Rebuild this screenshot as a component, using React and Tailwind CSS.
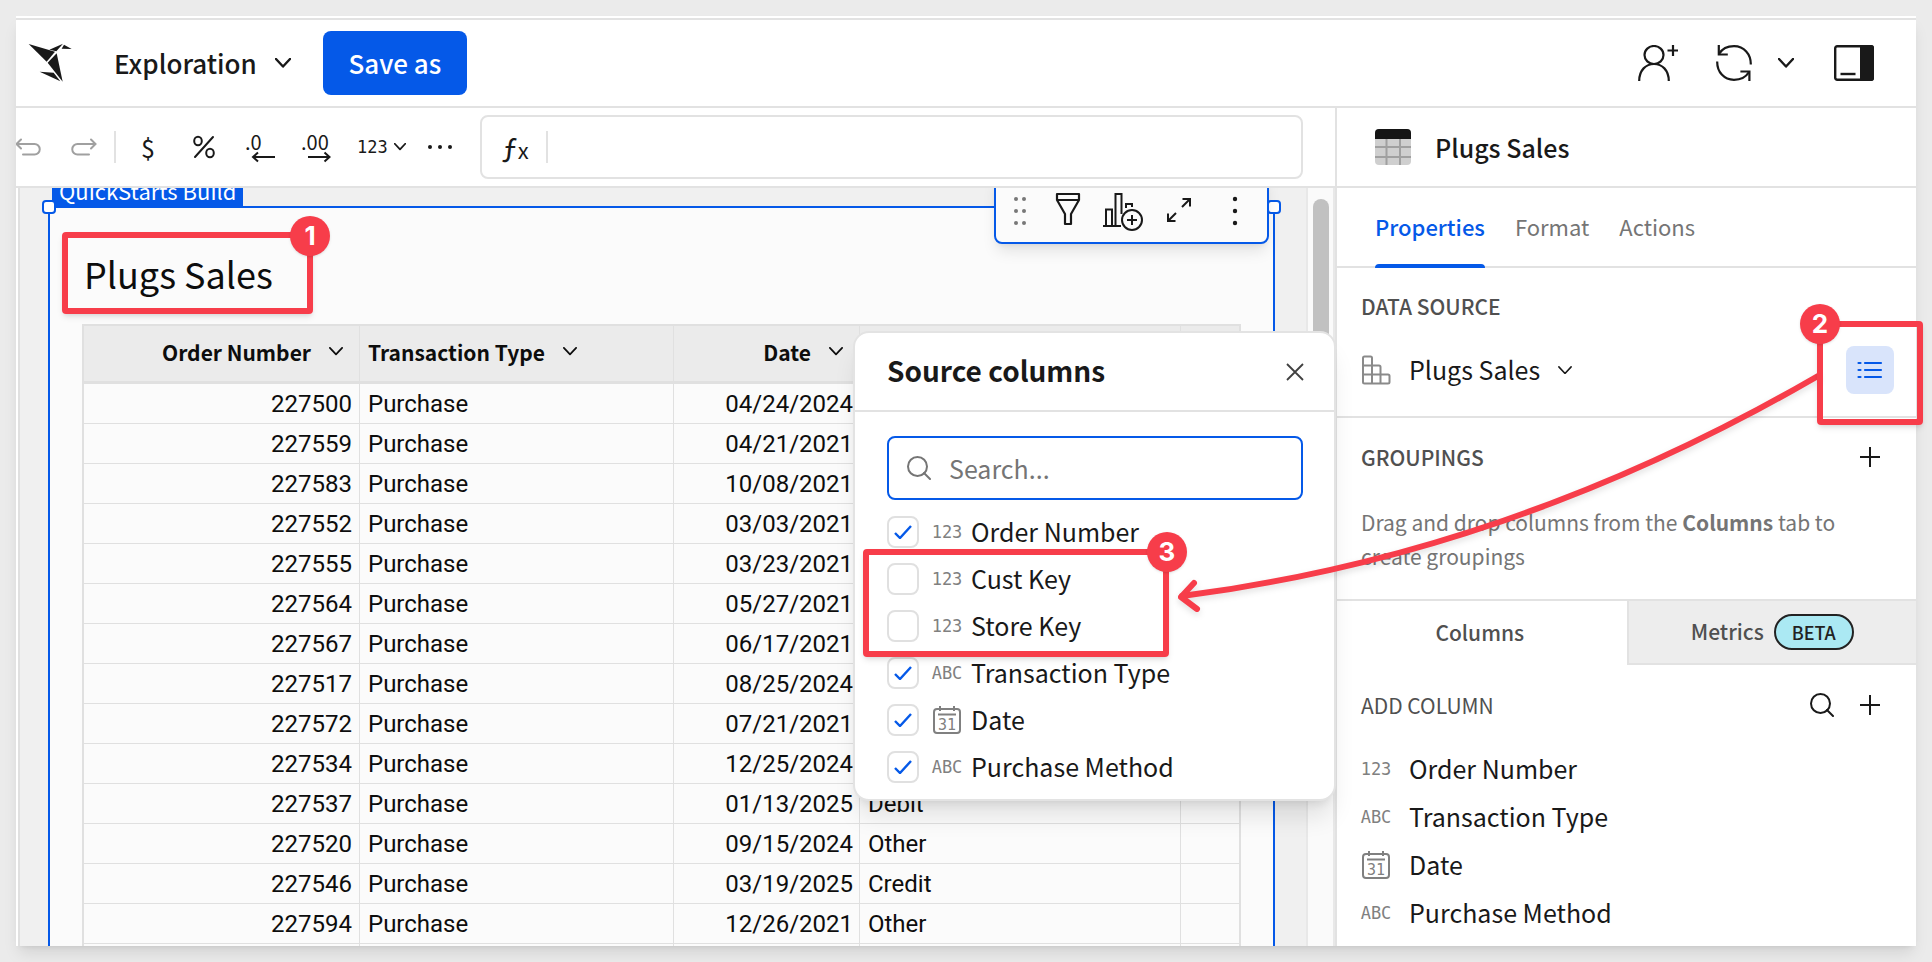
const ROWS = [
  ["227500", "04/24/2024", "Credit"],
  ["227559", "04/21/2021", "Debit"],
  ["227583", "10/08/2021", "Credit"],
  ["227552", "03/03/2021", "Other"],
  ["227555", "03/23/2021", "Debit"],
  ["227564", "05/27/2021", "Credit"],
  ["227567", "06/17/2021", "Other"],
  ["227517", "08/25/2024", "Debit"],
  ["227572", "07/21/2021", "Credit"],
  ["227534", "12/25/2024", "Other"],
  ["227537", "01/13/2025", "Debit"],
  ["227520", "09/15/2024", "Other"],
  ["227546", "03/19/2025", "Credit"],
  ["227594", "12/26/2021", "Other"],
];

const SOURCE_COLUMNS = [
  { name: "Order Number", type: "number", on: true },
  { name: "Cust Key", type: "number", on: false },
  { name: "Store Key", type: "number", on: false },
  { name: "Transaction Type", type: "text", on: true },
  { name: "Date", type: "date", on: true },
  { name: "Purchase Method", type: "text", on: true },
];

const TABLE_COLUMNS = SOURCE_COLUMNS.filter((c) => c.on);

function Chevron({ className = "w-4", strokeWidth = 2 }) {
  return (
    <svg viewBox="0 0 16 10" className={className} fill="none" stroke="currentColor" strokeWidth={strokeWidth} strokeLinecap="round" strokeLinejoin="round" aria-hidden="true">
      <path d="M1 1l7 7.5L15 1" />
    </svg>
  );
}

function Plus() {
  return (
    <svg viewBox="0 0 20 20" className="size-5" fill="none" stroke="currentColor" strokeWidth="2" aria-hidden="true">
      <path d="M10 0v20M0 10h20" />
    </svg>
  );
}

function SearchIcon({ className }) {
  return (
    <svg viewBox="0 0 24 24" className={className} fill="none" stroke="currentColor" strokeWidth="2" strokeLinecap="round" aria-hidden="true">
      <circle cx="10.5" cy="10.5" r="9.5" />
      <path d="M17 17l6 6" />
    </svg>
  );
}

function TypeIcon({ type }) {
  if (type === "date") {
    return (
      <svg viewBox="0 0 28 28" className="size-7 shrink-0 text-[#808080]" fill="none" stroke="currentColor" strokeWidth="2" aria-hidden="true">
        <rect x="1" y="3" width="26" height="24" rx="3" />
        <path d="M5 8.5h18M7 0v5M21 0v5" />
        <text x="14" y="23.5" textAnchor="middle" fontSize="15" fontFamily="DejaVu Sans Mono, monospace" fill="currentColor" stroke="none">31</text>
      </svg>
    );
  }
  return (
    <span className="w-7 shrink-0 flex justify-center font-['DejaVu_Sans_Mono',monospace] text-[17px] leading-7 text-[#808080]">
      {type === "number" ? "123" : "ABC"}
    </span>
  );
}

function Header() {
  return (
    <header className="h-[90px] shrink-0 border-y-2 border-[#e2e2e2] flex items-center pl-3 pr-[42px] text-[#191919]">
      <a href="#home" aria-label="Home">
        <svg viewBox="36 28 132 118" className="w-11" fill="currentColor" aria-hidden="true">
          <path d="M38 31L117 54L92 84Z" />
          <path d="M100 48L141 30L121 53Z" />
          <path d="M144 33L167 46L137 45Z" />
          <path d="M95 87L122 59L140 144Z" />
          <path d="M71 114L113 117L133 143Z" />
        </svg>
      </a>
      <button type="button" className="ml-[42px] flex items-center gap-[18px] text-[26px] leading-10 font-medium">
        Exploration
        <Chevron strokeWidth={2.4} />
      </button>
      <button type="button" className="ml-8 h-16 w-36 rounded-lg bg-[#0559e8] text-[26px] leading-10 font-medium text-white">
        Save as
      </button>
      <div className="ml-auto flex items-center">
        <button type="button" aria-label="Share">
          <svg viewBox="0 0 40 36" className="w-10" fill="none" stroke="currentColor" strokeWidth="2.2" aria-hidden="true">
            <ellipse cx="16" cy="10" rx="9.5" ry="9" />
            <path d="M1.2 36C1.2 25 8 19 16 19s14.800 6 14.800 17M35 0v11M29.500 5.500h10.500" />
          </svg>
        </button>
        <button type="button" aria-label="Refresh" className="ml-[38px]">
          <svg viewBox="0 0 36 36" className="w-9" fill="none" stroke="currentColor" strokeWidth="2.2" aria-hidden="true">
            <path d="M3 9C6 4 11.500 1.200 18 1.200C28 1.200 35 9 34.800 19.500M33 27C30 32 24.500 34.800 18 34.800C8 34.800 1 27 1.200 16.500" />
            <path d="M2.800 0v9.500h9M33.400 36v-9.500h-9" />
          </svg>
        </button>
        <button type="button" aria-label="Refresh options" className="ml-[26px]">
          <Chevron strokeWidth={2.4} />
        </button>
        <button type="button" aria-label="Toggle panel" className="ml-10">
          <svg viewBox="0 0 40 36" className="w-10" aria-hidden="true">
            <rect x="1.200" y="1.200" width="37.600" height="33.600" rx="2" fill="white" stroke="currentColor" strokeWidth="2.400" />
            <path d="M26 0h11a3 3 0 0 1 3 3v30a3 3 0 0 1-3 3H26Z" fill="currentColor" />
            <path d="M6.500 29h15" stroke="currentColor" strokeWidth="2.400" />
          </svg>
        </button>
      </div>
    </header>
  );
}

function DecimalIcon({ label, right }) {
  return (
    <svg viewBox="0 0 30 30" className="size-[30px] overflow-visible" fill="none" stroke="currentColor" strokeWidth="2" aria-hidden="true">
      <text x="0" y="18" fontSize="20" fill="currentColor" stroke="none">{label}</text>
      {right ? <path d="M7 25h21M23.500 20.500L28.500 25l-5 4.500" /> : <path d="M30 25H8M13 20.500L8 25l5 4.500" />}
    </svg>
  );
}

function FormatBar() {
  return (
    <div className="h-20 shrink-0 border-b-2 border-[#e2e2e2] flex items-center overflow-hidden pr-8 text-[#191919]">
      <button type="button" aria-label="Undo" className="-ml-4 w-14 shrink-0 flex justify-center text-[#a0a0a0]">
        <svg viewBox="0 0 26 18" className="w-[26px]" fill="none" stroke="currentColor" strokeWidth="2" strokeLinecap="round" aria-hidden="true">
          <path d="M2 6h17.500a5 5 0 0 1 0 10.500H8M6 1.500L1.500 6L6 10.500" />
        </svg>
      </button>
      <button type="button" aria-label="Redo" className="w-14 shrink-0 flex justify-center text-[#a0a0a0]">
        <svg viewBox="0 0 26 18" className="w-[26px]" fill="none" stroke="currentColor" strokeWidth="2" strokeLinecap="round" aria-hidden="true">
          <path d="M24 6H6.500a5 5 0 0 0 0 10.500H18M20 1.500L24.500 6L20 10.500" />
        </svg>
      </button>
      <span className="ml-0.5 mr-1 h-8 w-0.5 shrink-0 bg-[#e2e2e2]" />
      <button type="button" aria-label="Currency" className="w-14 shrink-0 text-[25px] leading-8">$</button>
      <button type="button" aria-label="Percent" className="w-14 shrink-0 flex justify-center">
        <svg viewBox="0 0 22 24" className="w-[22px]" fill="none" stroke="currentColor" strokeWidth="2" strokeLinecap="round" aria-hidden="true">
          <ellipse cx="5" cy="6" rx="3.800" ry="4.200" />
          <ellipse cx="17" cy="18" rx="3.800" ry="4.200" />
          <path d="M20 2L2 22" />
        </svg>
      </button>
      <button type="button" aria-label="Decrease decimals" className="w-14 shrink-0 flex justify-center">
        <DecimalIcon label=".0" />
      </button>
      <button type="button" aria-label="Increase decimals" className="w-14 shrink-0 flex justify-center">
        <DecimalIcon label=".00" right />
      </button>
      <button type="button" aria-label="Number format" className="ml-[13px] shrink-0 flex items-center gap-[6px] font-['DejaVu_Sans_Mono',monospace] text-[17px] leading-7">
        123
        <Chevron className="w-3" strokeWidth={2.4} />
      </button>
      <button type="button" aria-label="More" className="ml-[21px] shrink-0">
        <svg viewBox="0 0 26 4" className="w-[26px]" fill="currentColor" aria-hidden="true">
          <circle cx="3" cy="2" r="2" />
          <circle cx="13" cy="2" r="2" />
          <circle cx="23" cy="2" r="2" />
        </svg>
      </button>
      <label className="ml-[27px] h-16 min-w-0 flex-1 rounded-lg border-2 border-[#e2e2e2] flex items-center pl-5">
        <span className="flex w-7 items-baseline leading-8">
          <span className="text-[29px]">ƒ</span>
          <span className="text-[22px]">x</span>
        </span>
        <span className="ml-4 h-8 w-0.5 bg-[#e2e2e2]" />
        <input type="text" aria-label="Formula" className="min-w-0 flex-1 bg-transparent px-4 text-[22px] outline-none" />
      </label>
    </div>
  );
}

function HeaderCell({ children, right, last }) {
  return (
    <th scope="col" className={`h-[58px] border-b-3 border-[#e0e0e0] bg-[#ebebeb] px-2 pb-1 font-bold ${last ? "" : "border-r"}`}>
      <span className={`flex items-center gap-[18px] ${right ? "justify-end pr-2" : ""}`}>
        {children}
        {children && <Chevron className="w-3.5" />}
      </span>
    </th>
  );
}

function DataTable() {
  return (
    <table className="w-full table-fixed border-separate border-spacing-0 border-x-2 border-t-2 border-[#e0e0e0] text-[#0d0d0d]">
      <colgroup>
        <col className="w-[276px]" />
        <col className="w-[314px]" />
        <col className="w-[186px]" />
        <col />
        <col className="w-[58px]" />
      </colgroup>
      <thead className="text-left text-[21px] leading-8">
        <tr>
          <HeaderCell right>Order Number</HeaderCell>
          <HeaderCell>Transaction Type</HeaderCell>
          <HeaderCell right>Date</HeaderCell>
          <HeaderCell />
          <HeaderCell last />
        </tr>
      </thead>
      <tbody className="font-['Roboto',sans-serif] text-[24px] leading-7 [&_td]:h-10 [&_td]:border-b [&_td]:border-[#e0e0e0]">
        {ROWS.map(([order, date, method]) => (
          <tr key={order}>
            <td className="border-r pr-[7px] text-right">{order}</td>
            <td className="border-r px-2">Purchase</td>
            <td className="border-r pr-1.5 text-right">{date}</td>
            <td className="border-r px-2">{method}</td>
            <td />
          </tr>
        ))}
        <tr>
          <td className="border-r" />
          <td className="border-r" />
          <td className="border-r" />
          <td className="border-r" />
          <td />
        </tr>
      </tbody>
    </table>
  );
}

function ElementToolbar() {
  return (
    <div className="absolute right-1 -top-9 flex h-[72px] items-end rounded-lg border-2 border-[#0559e8] bg-[#fbfbfb] pb-3 pl-[17px] pr-[29px] text-[#191919] shadow-lg">
      <button type="button" aria-label="Drag" className="mb-1 w-7 text-[#777777]">
        <svg viewBox="0 0 14 30" className="w-3.5" fill="currentColor" aria-hidden="true">
          {[3, 15, 27].map((y) => (
            <g key={y}>
              <circle cx="3" cy={y} r="2" />
              <circle cx="11" cy={y} r="2" />
            </g>
          ))}
        </svg>
      </button>
      <button type="button" aria-label="Filter" className="ml-3.5 mb-1">
        <svg viewBox="0 0 26 34" className="w-[26px]" fill="none" stroke="currentColor" strokeWidth="2.200" strokeLinejoin="round" aria-hidden="true">
          <path d="M2 2h22v6L16 22v10h-6V22L2 8ZM2 8h22" />
        </svg>
      </button>
      <button type="button" aria-label="Add chart" className="ml-[22px]">
        <svg viewBox="0 0 40 38" className="w-10 overflow-visible" fill="none" stroke="currentColor" strokeWidth="2" aria-hidden="true">
          <path d="M0 34h18M3 34V17.500h6V34M12.500 34V2h6v20M23 16v-4h6v3" />
          <circle cx="29" cy="28" r="10" />
          <path d="M29 23v10M24 28h10" />
        </svg>
      </button>
      <button type="button" aria-label="Maximize" className="ml-6 mb-2">
        <svg viewBox="0 0 24 24" className="w-6" fill="none" stroke="currentColor" strokeWidth="2" aria-hidden="true">
          <path d="M15 9L23 1M15.500 1H23v7.500M9 15L1 23M1 15.500V23h7.500" />
        </svg>
      </button>
      <button type="button" aria-label="More" className="ml-[41px] mb-1">
        <svg viewBox="0 0 6 30" className="w-1.5" fill="currentColor" aria-hidden="true">
          <circle cx="3" cy="3" r="2.200" />
          <circle cx="3" cy="15" r="2.200" />
          <circle cx="3" cy="27" r="2.200" />
        </svg>
      </button>
    </div>
  );
}

function Badge({ children, className }) {
  return (
    <span className={`absolute flex size-10 items-center justify-center rounded-full bg-[#f73d4a] font-['Inter',sans-serif] text-[26px] leading-8 font-bold text-white shadow-sm ${className}`}>
      {children}
    </span>
  );
}

function Canvas() {
  return (
    <div className="flex min-h-0 flex-1 overflow-hidden">
      <div className="ml-0.5 flex min-w-0 flex-1 flex-col border-l-2 border-[#e0e0e0] bg-[#f0f0f0] pl-7 pr-[31px]">
        <div className="flex h-[18px] shrink-0 items-end overflow-hidden pl-1">
          <span className="bg-[#0559e8] px-[7px] pb-0.5 text-[22px] leading-7 text-white">QuickStarts Build</span>
        </div>
        <section className="relative min-h-0 flex-1 border-x-2 border-t-2 border-[#0559e8] bg-[#fbfbfb] px-8">
          <span className="absolute -left-2 -top-2 size-3.5 rounded border-2 border-[#0559e8] bg-white" />
          <span className="absolute -right-2 -top-2 size-3.5 rounded border-2 border-[#0559e8] bg-white" />
          <ElementToolbar />
          <div className="relative w-fit pt-10 pb-[26px]">
            <h1 className="pl-0.5 text-[36px] leading-[50px] text-[#0d0d0d]">Plugs Sales</h1>
            <div className="absolute -left-5 top-6 h-[82px] w-[251px] rounded border-6 border-[#f73d4a] shadow-md">
              <Badge className="-right-[23px] -top-[22px]">1</Badge>
            </div>
          </div>
          <DataTable />
        </section>
      </div>
      <div className="flex w-[29px] shrink-0 flex-col items-center border-x-2 border-[#e8e8e8] bg-[#fafafa] pt-[11px]">
        <span className="h-80 w-4 rounded-full bg-[#c1c1c1]" />
      </div>
    </div>
  );
}

function SourceColumnsDialog() {
  return (
    <div role="dialog" aria-labelledby="source-columns-title" className="absolute right-[580px] top-[223px] w-[483px] rounded-2xl border-2 border-[#e3e3e3] bg-white pb-[9px] text-[#191919] shadow-xl">
      <div className="flex h-[79px] items-center justify-between border-b-2 border-[#e2e2e2] pl-8 pr-[30px]">
        <h2 id="source-columns-title" className="pb-1 text-[28px] leading-10 font-bold">Source columns</h2>
        <button type="button" aria-label="Close" className="text-[#404040]">
          <svg viewBox="0 0 18 18" className="size-[18px]" fill="none" stroke="currentColor" strokeWidth="1.800" aria-hidden="true">
            <path d="M1 1l16 16M17 1L1 17" />
          </svg>
        </button>
      </div>
      <div className="pl-8 pr-[31px] pt-6">
        <label className="flex h-16 items-center gap-[18px] rounded-lg border-2 border-[#0559e8] pl-[18px] text-[#757575]">
          <SearchIcon className="size-6 shrink-0" />
          <input type="text" placeholder="Search..." aria-label="Search columns" className="min-w-0 flex-1 bg-transparent text-[25px] leading-10 placeholder-[#757575] outline-none" />
        </label>
        <ul className="mt-2 text-[25px] leading-8">
          {SOURCE_COLUMNS.map((c) => (
            <li key={c.name} className="flex h-[47px] items-center">
              <label className="flex items-center">
                <span className="grid size-8">
                  <input type="checkbox" defaultChecked={c.on} className="peer col-start-1 row-start-1 size-8 appearance-none rounded-lg border-2 border-[#e0e0e0] bg-white" />
                  <svg viewBox="0 0 18 14" className="pointer-events-none invisible col-start-1 row-start-1 w-[18px] place-self-center text-[#0559e8] peer-checked:visible" fill="none" stroke="currentColor" strokeWidth="2.400" aria-hidden="true">
                    <path d="M1 8l5 5L17 1" />
                  </svg>
                </span>
                <span className="ml-3.5 flex">
                  <TypeIcon type={c.type} />
                </span>
                <span className="ml-2.5 pb-0.5">{c.name}</span>
              </label>
            </li>
          ))}
        </ul>
      </div>
    </div>
  );
}

function PropertiesPanel() {
  return (
    <aside className="flex w-[581px] shrink-0 flex-col overflow-hidden border-l-2 border-[#e2e2e2] bg-white text-[#191919]">
      <div className="flex h-20 shrink-0 items-center gap-6 border-b-2 border-[#e2e2e2] pl-[38px]">
        <svg viewBox="0 0 36 36" className="size-9" aria-hidden="true">
          <rect width="36" height="36" rx="4" fill="#cfcfcf" />
          <path d="M0 18h36M0 28h36M11.500 10v26M25 10v26" stroke="#a0a0a0" strokeWidth="2" />
          <path d="M0 10V4a4 4 0 0 1 4-4h28a4 4 0 0 1 4 4v6Z" fill="#151515" />
        </svg>
        <h2 className="text-[25px] leading-10 font-medium">Plugs Sales</h2>
      </div>
      <nav className="flex h-20 shrink-0 gap-[30px] border-b-2 border-[#e2e2e2] pl-[38px] text-[22px] leading-8 text-[#757575]">
        <a href="#properties" className="relative flex items-center pb-0.5 font-medium text-[#0559e8]">
          Properties
          <span className="absolute inset-x-0 -bottom-0.5 h-1 rounded-t bg-[#0559e8]" />
        </a>
        <a href="#format" className="flex items-center pb-0.5">Format</a>
        <a href="#actions" className="flex items-center pb-0.5">Actions</a>
      </nav>
      <section className="border-b-2 border-[#e2e2e2] py-[22px] pl-6 pr-[22px]">
        <h3 className="text-[21px] leading-8 font-medium text-[#505050]">DATA SOURCE</h3>
        <div className="mt-6 flex h-12 items-center justify-between">
          <button type="button" className="flex items-center text-[25px] leading-10">
            <svg viewBox="0 0 30 30" className="size-[30px] text-[#8a8a8a]" fill="none" stroke="currentColor" strokeWidth="2" strokeLinejoin="round" aria-hidden="true">
              <path d="M2 3a1.500 1.500 0 0 1 1.500-1.500h6A1.500 1.500 0 0 1 11 3v7.500h7a1.500 1.500 0 0 1 1.500 1.500v7.500h7.500a1.500 1.500 0 0 1 1.500 1.500v6a1.500 1.500 0 0 1-1.500 1.500H3.500A1.500 1.500 0 0 1 2 27ZM2 10.500h9v18M2 19.500h17.500v9" />
            </svg>
            <span className="ml-[18px] pb-0.5">Plugs Sales</span>
            <Chevron className="ml-[18px] w-3.5" strokeWidth={1.8} />
          </button>
          <button type="button" aria-label="Source columns" className="flex size-12 items-center justify-center rounded-lg bg-[#d9e4fb] text-[#0559e8]">
            <svg viewBox="0 0 26 18" className="w-[26px]" fill="none" stroke="currentColor" strokeWidth="2.200" strokeLinecap="round" aria-hidden="true">
              <path d="M1.500 2h2M1.500 9h2M1.500 16h2M8 2h16M8 9h16M8 16h16" />
            </svg>
          </button>
        </div>
      </section>
      <section className="border-b-2 border-[#e2e2e2] pt-[23px] pb-[26px] pl-6 pr-[22px]">
        <div className="flex items-center justify-between pr-3.5">
          <h3 className="text-[21px] leading-8 font-medium text-[#505050]">GROUPINGS</h3>
          <button type="button" aria-label="Add grouping"><Plus /></button>
        </div>
        <p className="mt-8 text-[21px] leading-[34px] text-[#757575]">
          Drag and drop columns from the <strong className="font-bold">Columns</strong> tab to create groupings
        </p>
      </section>
      <div className="grid h-16 shrink-0 grid-cols-2 text-[21px] leading-8 font-medium text-[#505050]">
        <button type="button" className="pb-0.5 pr-1">Columns</button>
        <button type="button" className="flex items-center justify-center gap-2.5 border-b-2 border-l-2 border-[#e2e2e2] bg-[#ededed]">
          <span className="pb-0.5">Metrics</span>
          <span className="flex h-9 w-20 items-center justify-center rounded-full border-2 border-[#222222] bg-[#abe9f3] text-[18px] text-[#222222]">BETA</span>
        </button>
      </div>
      <section className="pt-6 pl-6 pr-9">
        <div className="flex items-center">
          <h3 className="text-[21px] leading-8 text-[#505050]">ADD COLUMN</h3>
          <button type="button" aria-label="Search columns" className="ml-auto"><SearchIcon className="size-6" /></button>
          <button type="button" aria-label="Add column" className="ml-[26px]"><Plus /></button>
        </div>
        <ul className="mt-6 text-[25px] leading-8">
          {TABLE_COLUMNS.map((c) => (
            <li key={c.name} className="flex h-12 items-center gap-[19px] pl-px">
              <TypeIcon type={c.type} />
              <span className="pb-0.5">{c.name}</span>
            </li>
          ))}
        </ul>
      </section>
    </aside>
  );
}

function Callouts() {
  return (
    <div className="pointer-events-none absolute inset-0 overflow-hidden">
      <svg viewBox="0 0 660 260" className="absolute right-[102px] top-[362px] w-[660px] drop-shadow-md" fill="none" stroke="#f73d4a" strokeWidth="6" strokeLinecap="round" strokeLinejoin="round" aria-hidden="true">
        <path d="M648 14Q341 192 12 234" />
        <path d="M24 221L11 235L27 247" />
      </svg>
      <div className="absolute right-[9px] top-[321px] h-[104px] w-[106px] rounded border-6 border-[#f73d4a] shadow-md">
        <Badge className="-left-[23px] -top-[23px]">2</Badge>
      </div>
      <div className="absolute right-[763px] top-[549px] h-[108px] w-[306px] rounded border-6 border-[#f73d4a] shadow-md">
        <Badge className="-right-[24px] -top-[23px]">3</Badge>
      </div>
    </div>
  );
}

export default function App() {
  return (
    <div className="relative flex h-screen flex-col overflow-hidden bg-[#ebebeb] p-4 font-['Noto_Sans_CJK_SC','Noto_Sans',sans-serif]">
      <main className="flex min-h-0 flex-1 flex-col overflow-hidden bg-white pt-0.5 shadow-lg">
        <Header />
        <div className="relative flex min-h-0 flex-1">
          <div className="flex min-w-0 flex-1 flex-col">
            <FormatBar />
            <Canvas />
          </div>
          <PropertiesPanel />
          <SourceColumnsDialog />
        </div>
      </main>
      <Callouts />
    </div>
  );
}
